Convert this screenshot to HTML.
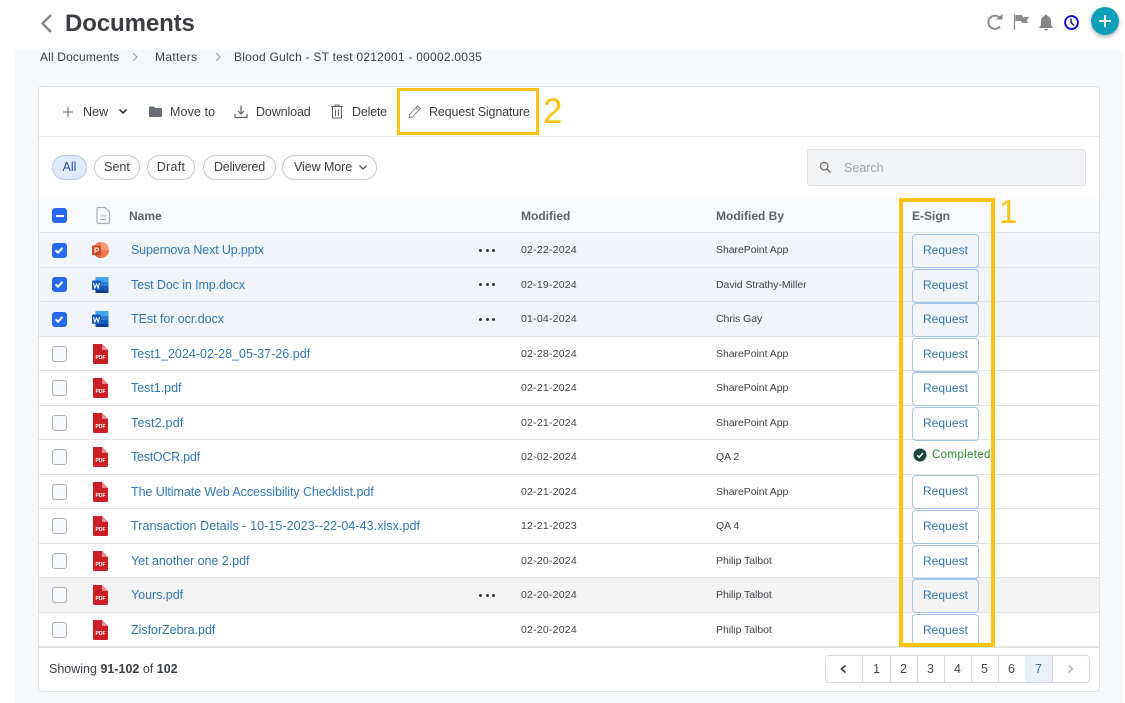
<!DOCTYPE html>
<html><head><meta charset="utf-8">
<style>
html,body{margin:0;padding:0;width:1125px;height:703px;overflow:hidden;background:#fff;font-family:"Liberation Sans",sans-serif;color:#3a3d42}
.a{position:absolute}
.t{position:absolute;white-space:nowrap;line-height:16px;height:16px}
.tb{font-size:12.5px;letter-spacing:0;color:#3c4046}
.pill{position:absolute;top:155px;height:23px;border:1px solid #c4c8cc;border-radius:13px;font-size:12.5px;line-height:23px;text-align:center;color:#3c4046;letter-spacing:0;background:#fff}
.row{position:absolute;left:39px;width:1060px;height:34.5px;border-bottom:1px solid #e1e3e6;box-sizing:border-box}
.sel{background:#f1f4f8}.hov{background:#f3f3f4}
.cb{position:absolute;left:52px;width:14.5px;height:14.5px;border-radius:3px;background:#2569ec;box-sizing:border-box}
.un{position:absolute;left:51.5px;width:15.5px;height:15.5px;border-radius:3px;background:#f7f9fb;border:1px solid #aab2bf;box-sizing:border-box}
.n{position:absolute;left:131px;font-size:12.5px;letter-spacing:-.03px;color:#3277b5;white-space:nowrap;line-height:16px}
.d{position:absolute;left:521px;font-size:10.5px;letter-spacing:.22px;color:#3f4247;white-space:nowrap;line-height:16px}
.m{position:absolute;left:716px;font-size:10.5px;letter-spacing:-.05px;color:#3f4247;white-space:nowrap;line-height:16px}
.r{position:absolute;left:912px;width:65px;height:32px;border:1px solid #a3c4e4;border-radius:4px;text-align:center;font-size:12px;line-height:30px;letter-spacing:.05px;color:#3277b5}
.dots{position:absolute;left:479px;width:17px;height:3px}
.dots i{position:absolute;top:0;width:3.4px;height:3.4px;border-radius:50%;background:#33363a}
.ic{position:absolute;left:91px;width:20px;height:20px}
.th{position:absolute;top:208px;font-size:12px;font-weight:bold;letter-spacing:0;color:#5f6267;line-height:16px;white-space:nowrap}
.pg{position:absolute;top:656px;width:27px;height:26px;border-right:1px solid #d5d8dc;font-size:12.5px;line-height:26px;text-align:center;color:#45484d;box-sizing:content-box}
</style></head><body>
<svg width="0" height="0" style="position:absolute"><defs>
<symbol id="pdf" viewBox="0 0 20 20"><path d="M2 0H11L17 6V18.500Q17 20 15.500 20H3.500Q2 20 2 18.500Z" fill="#cc1f25"/><path d="M11 0L17 6H11Z" fill="#e58a8c"/></symbol>
<symbol id="word" viewBox="0 0 20 20"><rect x="4.500" y="2" width="13" height="16" rx="1" fill="#2b7cd3"/><rect x="4.500" y="2" width="13" height="5" fill="#41a5ee"/><rect x="4.500" y="11" width="13" height="4" fill="#185abd"/><rect x="4.500" y="15" width="13" height="3" fill="#103f91"/><rect x="1" y="5.500" width="9" height="9.500" rx="1" fill="#1a5cbe"/><path d="M2.500 8L3.800 13L5.500 9L7.200 13L8.500 8" fill="none" stroke="#fff" stroke-width="1"/></symbol>
<symbol id="ppt" viewBox="0 0 20 20"><circle cx="10" cy="10" r="8" fill="#ee7a50"/><path d="M10 2A8 8 0 0 1 18 10H10Z" fill="#ff9a78"/><path d="M10 18A8 8 0 0 1 2 10H10Z" fill="#dc5f38"/><rect x="1" y="5.500" width="9" height="9.500" rx="1" fill="#c94a26"/><path d="M4 13V8H6Q7.500 8 7.500 9.500T6 11H4" fill="none" stroke="#fff" stroke-width="1"/></symbol>
<symbol id="chk" viewBox="0 0 14 14"><path d="M3.500 7.300L6 9.700L10.500 4.800" fill="none" stroke="#fff" stroke-width="2"/></symbol>
</defs></svg>

<!-- Background -->
<div class="a" style="left:15px;top:50px;width:1108px;height:653px;background:#f6f9fc"></div>

<!-- Header -->
<svg class="a" style="left:38px;top:13px" width="16" height="20" viewBox="0 0 16 20"><path d="M13 2L4.500 10.500L13 19" fill="none" stroke="#888" stroke-width="2.500"/></svg>
<div class="t" style="left:65px;top:9px;height:29px;line-height:29px;font-size:24px;font-weight:bold;color:#3b3d41;letter-spacing:-.1px">Documents</div>
<svg class="a" style="left:986px;top:13px" width="18" height="18" viewBox="0 0 18 18"><path d="M14 13.500A6.600 6.600 0 1 1 13.500 4.500" fill="none" stroke="#858585" stroke-width="1.800"/><path d="M10 6.500H16.500V1Z" fill="#858585"/></svg>
<svg class="a" style="left:1012px;top:13px" width="18" height="18" viewBox="0 0 18 18"><path d="M2.500 1V17" stroke="#8c8c8c" stroke-width="1.300"/><path d="M3.500 2H10L11 4H17L14.500 7.500L16.500 10H10L9 8H3.500Z" fill="#8c8c8c"/></svg>
<svg class="a" style="left:1038px;top:14px" width="16" height="17" viewBox="0 0 16 17"><path d="M8 0.500Q9.200 .5 9.300 2Q13 3 13 7.500V11L15 14H1L3 11V7.500Q3 3 6.700 2Q6.800 .5 8 .5Z" fill="#858585"/><path d="M6 15H10Q9.500 16.500 8 16.500T6 15Z" fill="#858585"/></svg>
<svg class="a" style="left:1063px;top:14px" width="17" height="17" viewBox="0 0 17 17"><circle cx="8.500" cy="8.500" r="6.400" fill="none" stroke="#0808e8" stroke-width="1.900"/><path d="M8 4.500V8.500L11 11.500" fill="none" stroke="#1a1a80" stroke-width="1.500"/></svg>
<div class="a" style="left:1091px;top:7px;width:28px;height:28px;border-radius:50%;background:#0aa0b8;box-shadow:0 2px 4px rgba(0,0,0,.3)"></div>
<svg class="a" style="left:1091px;top:7px" width="28" height="28"><path d="M14 8V20M8 14H20" stroke="#fff" stroke-width="2"/></svg>

<!-- Breadcrumb -->
<div class="t" style="left:40px;top:49px;font-size:12px;letter-spacing:.15px;color:#3c4046">All Documents</div>
<svg class="a" style="left:131px;top:52px" width="8" height="10"><path d="M2 1L6 5L2 9" fill="none" stroke="#a5a5a5" stroke-width="1.200"/></svg>
<div class="t" style="left:155px;top:49px;font-size:12px;letter-spacing:.35px;color:#3c4046">Matters</div>
<svg class="a" style="left:214px;top:52px" width="8" height="10"><path d="M2 1L6 5L2 9" fill="none" stroke="#a5a5a5" stroke-width="1.200"/></svg>
<div class="t" style="left:234px;top:49px;font-size:12px;letter-spacing:.24px;color:#3c4046">Blood Gulch - ST test 0212001 - 00002.0035</div>

<!-- Card -->
<div class="a" style="left:38px;top:86px;width:1062px;height:606px;background:#fff;border:1px solid #dfe2e6;border-radius:4px;box-sizing:border-box"></div>
<div class="a" style="left:39px;top:136px;width:1060px;height:1px;background:#e3e5e8"></div>

<!-- Toolbar -->
<svg class="a" style="left:62px;top:106px" width="12" height="12"><path d="M6 1V11M1 6H11" stroke="#6a6e74" stroke-width="1.100"/></svg>
<div class="t tb" style="left:83px;top:104px;letter-spacing:.1px">New</div>
<svg class="a" style="left:118px;top:108px" width="10" height="8"><path d="M1.500 1.500L5 5L8.500 1.500" fill="none" stroke="#33363a" stroke-width="1.600"/></svg>
<svg class="a" style="left:149px;top:106px" width="13" height="11"><path d="M0 1.500Q0 .5 1 .5H5L6 2H12Q13 2 13 3V10Q13 11 12 11H1Q0 11 0 10Z" fill="#666c78"/></svg>
<div class="t tb" style="left:170px;top:104px;letter-spacing:.1px">Move to</div>
<svg class="a" style="left:234px;top:105px" width="14" height="14" viewBox="0 0 14 14"><path d="M7 0.500V8.500M4 6L7 9L10 6" fill="none" stroke="#5e6268" stroke-width="1.200"/><path d="M1 9V12.500H13V9" fill="none" stroke="#5e6268" stroke-width="1.200"/></svg>
<div class="t tb" style="left:256px;top:104px;letter-spacing:-.12px">Download</div>
<svg class="a" style="left:331px;top:104px" width="12" height="15" viewBox="0 0 12 15"><path d="M0 2.500H12M4 2.500V1H8V2.500M1.500 3V14H10.500V3M4.500 5.500V12M7.500 5.500V12" fill="none" stroke="#5e6268" stroke-width="1"/></svg>
<div class="t tb" style="left:352px;top:104px;letter-spacing:-.2px">Delete</div>
<svg class="a" style="left:408px;top:104px" width="14" height="15" viewBox="0 0 14 15"><path d="M1.500 10.500L9.500 2L12.500 4.500L4.500 13L1 13.800ZM8 3.500L11 6.500" fill="none" stroke="#777b80" stroke-width=".9"/></svg>
<div class="t tb" style="left:429px;top:104px;letter-spacing:-.16px">Request Signature</div>

<!-- Filters -->
<div class="pill" style="left:52px;width:33px;background:#dfeafa;border-color:#b9c9dd;color:#2b4fa8">All</div>
<div class="pill" style="left:94px;width:44px">Sent</div>
<div class="pill" style="left:147px;width:46px;letter-spacing:.3px">Draft</div>
<div class="pill" style="left:203px;width:71px;letter-spacing:-.2px">Delivered</div>
<div class="pill" style="left:282px;width:93px;text-align:left;text-indent:11px;letter-spacing:-.08px">View More</div>
<svg class="a" style="left:358px;top:164px" width="10" height="8"><path d="M1.500 1.500L5 5L8.500 1.500" fill="none" stroke="#55585d" stroke-width="1.300"/></svg>
<div class="a" style="left:807px;top:149px;width:279px;height:37px;background:#f2f3f5;border:1px solid #dcdfe3;border-radius:3px;box-sizing:border-box"></div>
<svg class="a" style="left:819px;top:161px" width="13" height="13"><circle cx="5.200" cy="5.200" r="3.800" fill="none" stroke="#666" stroke-width="1.200"/><path d="M8 8L11.500 11.500" stroke="#666" stroke-width="1.300"/></svg>
<div class="t" style="left:844px;top:160px;font-size:12.5px;letter-spacing:0;color:#a3a6ab">Search</div>

<!-- Table header -->
<div class="a" style="left:39px;top:199px;width:1060px;height:34px;background:#fafbfc;border-bottom:1px solid #e1e3e6;box-sizing:border-box"></div>
<div class="cb" style="top:208px"></div>
<div class="a" style="left:55.500px;top:214.500px;width:8px;height:2px;background:#fff"></div>
<svg class="a" style="left:95px;top:206px" width="16" height="19" viewBox="0 0 16 19"><path d="M2 3Q2 1.500 3.500 1.500H10L14.500 6V16Q14.500 17.500 13 17.500H3.500Q2 17.500 2 16Z" fill="none" stroke="#a8adb5" stroke-width="1.200"/><path d="M5.500 10H11M5.500 13.500H11" stroke="#a8adb5" stroke-width="1"/></svg>
<div class="th" style="left:129px">Name</div>
<div class="th" style="left:521px">Modified</div>
<div class="th" style="left:716px">Modified By</div>
<div class="th" style="left:912px">E-Sign</div>

<!-- Rows -->
<div class="row sel" style="top:233px"></div>
<div class="row sel" style="top:267.500px"></div>
<div class="row sel" style="top:302px"></div>
<div class="row" style="top:336.500px"></div>
<div class="row" style="top:371px"></div>
<div class="row" style="top:405.500px"></div>
<div class="row" style="top:440px"></div>
<div class="row" style="top:474.500px"></div>
<div class="row" style="top:509px"></div>
<div class="row" style="top:543.500px"></div>
<div class="row hov" style="top:578px"></div>
<div class="row" style="top:612.500px;height:35px;border-bottom:2px solid #e1e3e6"></div>

<div class="cb" style="top:243px"></div><svg class="a" style="left:52px;top:243px" width="14" height="14"><use href="#chk"/></svg>
<div class="cb" style="top:277px"></div><svg class="a" style="left:52px;top:277px" width="14" height="14"><use href="#chk"/></svg>
<div class="cb" style="top:312px"></div><svg class="a" style="left:52px;top:312px" width="14" height="14"><use href="#chk"/></svg>
<div class="un" style="top:346px"></div><div class="un" style="top:380px"></div><div class="un" style="top:415px"></div><div class="un" style="top:449px"></div><div class="un" style="top:484px"></div><div class="un" style="top:518px"></div><div class="un" style="top:553px"></div><div class="un" style="top:587px"></div><div class="un" style="top:622px"></div>

<svg class="ic" style="top:240px"><use href="#ppt"/></svg>
<svg class="ic" style="top:274.500px"><use href="#word"/></svg>
<svg class="ic" style="top:309px"><use href="#word"/></svg>
<svg class="ic" style="top:343.500px"><use href="#pdf"/><text x="9.500" y="15" font-size="5" font-weight="bold" fill="#fff" text-anchor="middle">PDF</text></svg>
<svg class="ic" style="top:378px"><use href="#pdf"/><text x="9.500" y="15" font-size="5" font-weight="bold" fill="#fff" text-anchor="middle">PDF</text></svg>
<svg class="ic" style="top:412.500px"><use href="#pdf"/><text x="9.500" y="15" font-size="5" font-weight="bold" fill="#fff" text-anchor="middle">PDF</text></svg>
<svg class="ic" style="top:447px"><use href="#pdf"/><text x="9.500" y="15" font-size="5" font-weight="bold" fill="#fff" text-anchor="middle">PDF</text></svg>
<svg class="ic" style="top:481.500px"><use href="#pdf"/><text x="9.500" y="15" font-size="5" font-weight="bold" fill="#fff" text-anchor="middle">PDF</text></svg>
<svg class="ic" style="top:516px"><use href="#pdf"/><text x="9.500" y="15" font-size="5" font-weight="bold" fill="#fff" text-anchor="middle">PDF</text></svg>
<svg class="ic" style="top:550.500px"><use href="#pdf"/><text x="9.500" y="15" font-size="5" font-weight="bold" fill="#fff" text-anchor="middle">PDF</text></svg>
<svg class="ic" style="top:585px"><use href="#pdf"/><text x="9.500" y="15" font-size="5" font-weight="bold" fill="#fff" text-anchor="middle">PDF</text></svg>
<svg class="ic" style="top:619.500px"><use href="#pdf"/><text x="9.500" y="15" font-size="5" font-weight="bold" fill="#fff" text-anchor="middle">PDF</text></svg>

<div class="n" style="top:242px;letter-spacing:-.15px">Supernova Next Up.pptx</div>
<div class="n" style="top:276.500px;letter-spacing:-.1px">Test Doc in Imp.docx</div>
<div class="n" style="top:311px;letter-spacing:-.05px">TEst for ocr.docx</div>
<div class="n" style="top:345.500px;letter-spacing:.02px">Test1_2024-02-28_05-37-26.pdf</div>
<div class="n" style="top:380px">Test1.pdf</div>
<div class="n" style="top:414.500px;letter-spacing:.2px">Test2.pdf</div>
<div class="n" style="top:449px;letter-spacing:-.25px">TestOCR.pdf</div>
<div class="n" style="top:483.500px;letter-spacing:-.07px">The Ultimate Web Accessibility Checklist.pdf</div>
<div class="n" style="top:518px;letter-spacing:.065px">Transaction Details - 10-15-2023--22-04-43.xlsx.pdf</div>
<div class="n" style="top:552.500px">Yet another one 2.pdf</div>
<div class="n" style="top:587px">Yours.pdf</div>
<div class="n" style="top:621.500px">ZisforZebra.pdf</div>

<div class="dots" style="top:248.500px"><i style="left:0"></i><i style="left:6.500px"></i><i style="left:13px"></i></div>
<div class="dots" style="top:283px"><i style="left:0"></i><i style="left:6.500px"></i><i style="left:13px"></i></div>
<div class="dots" style="top:317.500px"><i style="left:0"></i><i style="left:6.500px"></i><i style="left:13px"></i></div>
<div class="dots" style="top:593.500px"><i style="left:0"></i><i style="left:6.500px"></i><i style="left:13px"></i></div>

<div class="d" style="top:242px">02-22-2024</div>
<div class="d" style="top:276.500px">02-19-2024</div>
<div class="d" style="top:311px">01-04-2024</div>
<div class="d" style="top:345.500px">02-28-2024</div>
<div class="d" style="top:380px">02-21-2024</div>
<div class="d" style="top:414.500px">02-21-2024</div>
<div class="d" style="top:449px">02-02-2024</div>
<div class="d" style="top:483.500px">02-21-2024</div>
<div class="d" style="top:518px">12-21-2023</div>
<div class="d" style="top:552.500px">02-20-2024</div>
<div class="d" style="top:587px">02-20-2024</div>
<div class="d" style="top:621.500px">02-20-2024</div>

<div class="m" style="top:242px">SharePoint App</div>
<div class="m" style="top:276.500px">David Strathy-Miller</div>
<div class="m" style="top:311px">Chris Gay</div>
<div class="m" style="top:345.500px">SharePoint App</div>
<div class="m" style="top:380px">SharePoint App</div>
<div class="m" style="top:414.500px">SharePoint App</div>
<div class="m" style="top:449px">QA 2</div>
<div class="m" style="top:483.500px">SharePoint App</div>
<div class="m" style="top:518px">QA 4</div>
<div class="m" style="top:552.500px">Philip Talbot</div>
<div class="m" style="top:587px">Philip Talbot</div>
<div class="m" style="top:621.500px">Philip Talbot</div>

<div class="r" style="top:234px">Request</div>
<div class="r" style="top:268.500px">Request</div>
<div class="r" style="top:303px">Request</div>
<div class="r" style="top:337.500px">Request</div>
<div class="r" style="top:372px">Request</div>
<div class="r" style="top:406.500px">Request</div>
<svg class="a" style="left:913px;top:448px" width="14" height="14"><circle cx="7" cy="7" r="6.500" fill="#17453a"/><path d="M4 7.200L6.200 9.200L10 5" fill="none" stroke="#fff" stroke-width="1.600"/></svg>
<div class="t" style="left:932px;top:447px;font-size:11.500px;letter-spacing:.35px;color:#2c8a2c">Completed</div>
<div class="r" style="top:475px">Request</div>
<div class="r" style="top:510px">Request</div>
<div class="r" style="top:544.500px">Request</div>
<div class="r" style="top:579px">Request</div>
<div class="r" style="top:613.500px;height:31px;border-bottom:0">Request</div>

<!-- Annotations -->
<div class="a" style="left:397px;top:88px;width:142px;height:47px;border:3.500px solid #fdc30f;box-sizing:border-box"></div>
<div class="t" style="left:543px;top:94px;height:36px;line-height:36px;font-size:35px;color:#fdc30f">2</div>
<div class="a" style="left:899px;top:198px;width:96px;height:449px;border:4px solid #fdc30f;box-sizing:border-box"></div>
<div class="t" style="left:999px;top:194px;height:36px;line-height:36px;font-size:33px;color:#fdc30f">1</div>

<!-- Footer -->
<div class="t" style="left:49px;top:661px;font-size:12.500px;letter-spacing:0;color:#3c4046">Showing <b>91-102</b> of <b>102</b></div>
<div class="a" style="left:825px;top:655px;width:265px;height:28px;border:1px solid #d5d8dc;border-radius:4px;box-sizing:border-box"></div>
<div class="pg" style="left:826px;width:36px"></div>
<svg class="a" style="left:839px;top:664px" width="9" height="10"><path d="M6.500 1.500L2.500 5L6.500 8.500" fill="none" stroke="#33363a" stroke-width="1.600"/></svg>
<div class="pg" style="left:863px">1</div>
<div class="pg" style="left:890px">2</div>
<div class="pg" style="left:917px">3</div>
<div class="pg" style="left:944px">4</div>
<div class="pg" style="left:971px">5</div>
<div class="pg" style="left:998px">6</div>
<div class="pg" style="left:1025px;background:#e9f0f8;color:#2f6fb0">7</div>
<svg class="a" style="left:1066px;top:664px" width="9" height="10"><path d="M2.500 1.500L6.500 5L2.500 8.500" fill="none" stroke="#aeb1b5" stroke-width="1.400"/></svg>
</body></html>
